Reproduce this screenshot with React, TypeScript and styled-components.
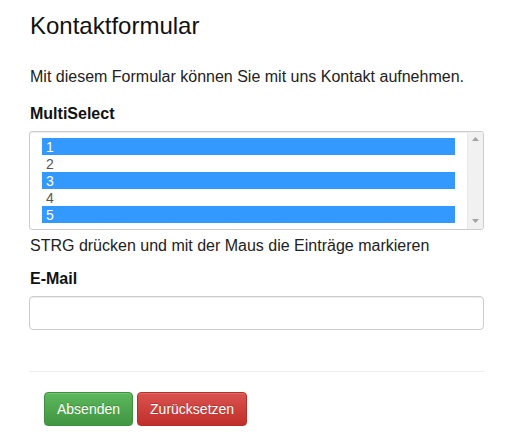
import { FC } from 'react';
import styled, { createGlobalStyle } from 'styled-components';

const GlobalStyle = createGlobalStyle`
  html, body {
    margin: 0;
    padding: 0;
    background: #fff;
  }
  body {
    font-family: "Liberation Sans", Arial, sans-serif;
    font-size: 16px;
    line-height: 1.42857;
    color: #222;
  }
  * {
    box-sizing: border-box;
  }
`;

const Page = styled.div`
  width: 511px;
  padding: 0 27px 0 29px;
`;

const Title = styled.h3`
  margin: 13px 0 0 1px;
  font-size: 24px;
  font-weight: 400;
  line-height: 1.1;
  color: #111;
`;

const Intro = styled.p`
  margin: 27px 0 0 1px;
`;

const FormGroup = styled.div`
  display: flex;
  flex-direction: column;
  margin-top: ${(p: { $top: number }) => p.$top}px;
`;

const Label = styled.label`
  display: block;
  margin: 0 0 5px 1px;
  font-weight: 700;
  color: #111;
`;

const ListBox = styled.div`
  display: flex;
  height: 99px;
  border: 1px solid #ccc;
  border-radius: 3px;
  background: #fff;
  box-shadow: inset 0 1px 1px rgba(0, 0, 0, 0.075);
  overflow: hidden;
`;

const Options = styled.ul`
  flex: 1;
  margin: 0;
  padding: 6px 12px;
  list-style: none;
`;

const Option = styled.li<{ $selected: boolean }>`
  height: 17px;
  padding: 1px 4px 0;
  font-size: 14px;
  line-height: 16px;
  background: ${(p) => (p.$selected ? '#3399ff' : 'transparent')};
  color: ${(p) => (p.$selected ? '#fff' : '#555')};
`;

const ScrollTrack = styled.div`
  display: flex;
  flex-direction: column;
  justify-content: space-between;
  align-items: center;
  width: 16px;
  padding: 5px 0 6px;
  background: #f1f1f1;
  border-left: 1px solid #e8e8e8;
`;

const Arrow = styled.svg`
  display: block;
`;

const HelpText = styled.p`
  margin: 5px 0 0 1px;
`;

const TextInput = styled.input`
  height: 34px;
  padding: 6px 12px;
  border: 1px solid #ccc;
  border-radius: 4px;
  font-family: inherit;
  font-size: 14px;
  color: #555;
  box-shadow: inset 0 1px 1px rgba(0, 0, 0, 0.075);
  outline: none;
`;

const Divider = styled.hr`
  margin: 41px 0 0;
  border: 0;
  border-top: 1px solid #eee;
`;

const Actions = styled.div`
  display: flex;
  gap: 4px;
  margin-top: 20px;
  padding-left: 15px;
`;

const Button = styled.button<{ $variant: 'success' | 'danger' }>`
  height: 34px;
  padding: 6px 12px;
  border: 1px solid ${(p) => (p.$variant === 'success' ? '#3e8f3e' : '#b92c28')};
  border-radius: 4px;
  background-image: ${(p) =>
    p.$variant === 'success'
      ? 'linear-gradient(to bottom, #5cb85c 0, #419641 100%)'
      : 'linear-gradient(to bottom, #d9534f 0, #c12e2a 100%)'};
  color: #fff;
  font-family: "Liberation Sans", Arial, sans-serif;
  font-size: 14px;
  line-height: 20px;
  text-shadow: 0 -1px 0 rgba(0, 0, 0, 0.2);
  box-shadow: inset 0 1px 0 rgba(255, 255, 255, 0.15), 0 1px 1px rgba(0, 0, 0, 0.075);
  cursor: pointer;
`;

const items = [
  { value: '1', selected: true },
  { value: '2', selected: false },
  { value: '3', selected: true },
  { value: '4', selected: false },
  { value: '5', selected: true },
];

const MultiSelect: FC = () => (
  <ListBox>
    <Options>
      {items.map((item) => (
        <Option key={item.value} $selected={item.selected}>
          {item.value}
        </Option>
      ))}
    </Options>
    <ScrollTrack>
      <Arrow width="7" height="4" viewBox="0 0 7 4">
        <path d="M0 4 L3.5 0 L7 4 Z" fill="#a3a3a3" />
      </Arrow>
      <Arrow width="7" height="4" viewBox="0 0 7 4">
        <path d="M0 0 L7 0 L3.5 4 Z" fill="#a3a3a3" />
      </Arrow>
    </ScrollTrack>
  </ListBox>
);

export default function App() {
  return (
    <Page>
      <GlobalStyle />
      <Title>Kontaktformular</Title>
      <Intro>Mit diesem Formular können Sie mit uns Kontakt aufnehmen.</Intro>
      <FormGroup $top={14}>
        <Label>MultiSelect</Label>
        <MultiSelect />
        <HelpText>STRG drücken und mit der Maus die Einträge markieren</HelpText>
      </FormGroup>
      <FormGroup $top={10}>
        <Label>E-Mail</Label>
        <TextInput type="email" />
      </FormGroup>
      <Divider />
      <Actions>
        <Button $variant="success">Absenden</Button>
        <Button $variant="danger">Zurücksetzen</Button>
      </Actions>
    </Page>
  );
}
